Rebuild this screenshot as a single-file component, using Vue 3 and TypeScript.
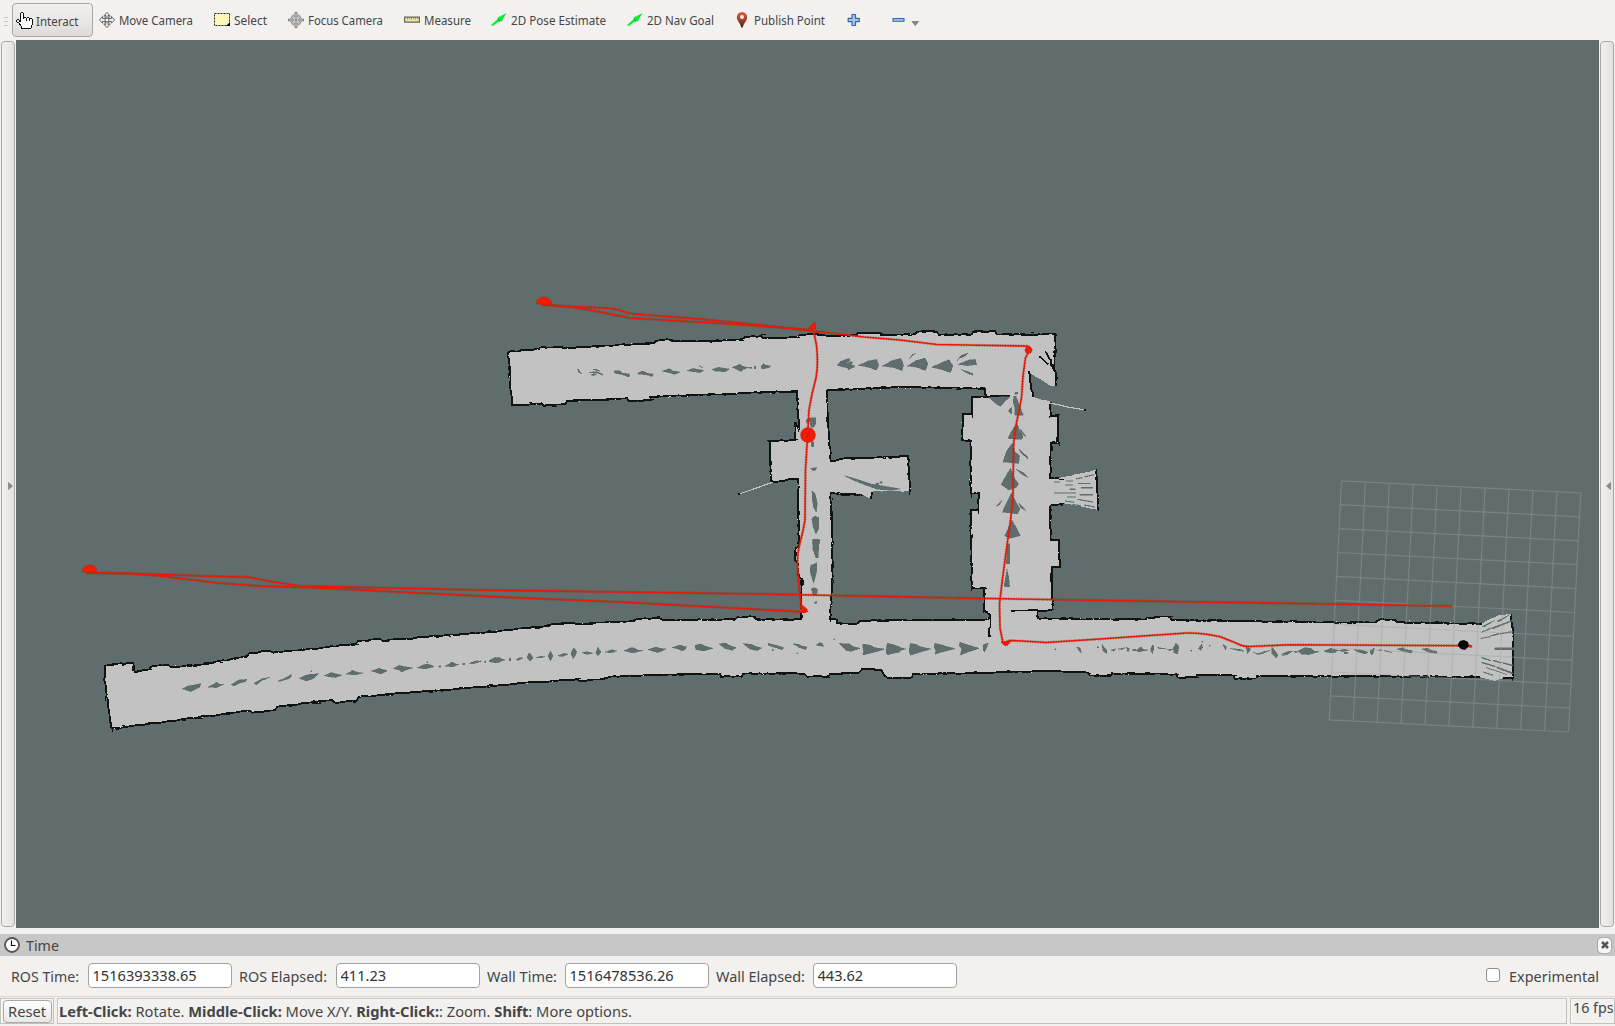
<script setup lang="ts">
interface Tool { name: string; label: string; cell: number; text: number }
interface Run { wall: boolean; pts: number[] }

const tools: Tool[] = [
  { name: 'move', label: 'Move Camera', cell: 115, text: 74 },
  { name: 'select', label: 'Select', cell: 74, text: 33 },
  { name: 'focus', label: 'Focus Camera', cell: 116, text: 75 },
  { name: 'measure', label: 'Measure', cell: 87, text: 47 },
  { name: 'arrow', label: '2D Pose Estimate', cell: 136, text: 95 },
  { name: 'arrow', label: '2D Nav Goal', cell: 107, text: 67 },
  { name: 'pin', label: 'Publish Point', cell: 111, text: 71 },
]

const fields = [
  { label: 'ROS Time:', width: 68, cell: 76, value: '1516393338.65' },
  { label: 'ROS Elapsed:', width: 88, cell: 96, value: '411.23' },
  { label: 'Wall Time:', width: 70, cell: 77, value: '1516478536.26' },
  { label: 'Wall Elapsed:', width: 89, cell: 96, value: '443.62' },
]

// Outer boundary of the mapped area, clockwise from the upper-left corridor.
const outer: Run[] = [
  { wall: true, pts: [508,352, 539,349, 540,347.5, 560,347, 563,348, 607,345.5, 654,343, 656,341, 667,339.3, 676,341, 697,341.5, 742,339.3, 745,337, 761,336, 763,338.3, 798,337, 799.5,335, 815,334, 828,336, 857,335, 857.5,332.7, 880,332.7, 881,334.7, 915,334.3, 917,332, 927,330.7, 937,332.3, 939,334.7, 972,334.5, 973,332, 995,331.3, 997,334.5, 1055,334, 1054.5,370, 1056,373, 1056,386] },
  { wall: false, pts: [1056,386, 1051,386, 1030,373] },
  { wall: true, pts: [1028.5,371, 1033,397] },
  { wall: false, pts: [1033,397, 1038,398.5, 1050,401.5] },
  { wall: true, pts: [1050.7,402, 1050.7,416, 1058,416, 1058,443, 1051,443, 1050,478, 1059,478] },
  { wall: false, pts: [1059,478, 1096.5,469.5] },
  { wall: true, pts: [1096.5,469.5, 1098,510] },
  { wall: false, pts: [1098,510, 1063,503] },
  { wall: true, pts: [1063,503.5, 1050.5,505.5, 1050.7,540, 1058.7,540, 1060,567, 1051.7,567, 1052.7,609.5, 1037.5,611, 1037.7,618.5, 1146,619.5, 1147,617.5, 1170,616.7, 1171.5,620, 1300,622, 1375,622.5, 1380,619.3, 1395,619.5, 1397,622, 1482,623.7] },
  { wall: false, pts: [1482,623.7, 1490,619, 1500,614.5, 1511,614] },
  { wall: true, pts: [1511.5,614, 1511.5,623, 1513.5,632, 1513,678, 1503,678] },
  { wall: false, pts: [1503,678, 1494,681, 1482,678] },
  { wall: true, pts: [1480,677.3, 1410,676.5, 1257,676, 1256.5,678.5, 1235,679, 1233,675.5, 1197,674.5, 1196,677.3, 1178,677.5, 1176,674.3, 1112,673.3, 1111.5,675.5, 1090,675.5, 1088,672.7, 1050,671.3, 1017,671.7, 913,674.3, 911.7,677.5, 888,678, 884,675, 881.7,670, 862,669.3, 859,672.7, 830,674.3, 828,676.7, 807,676.7, 804,673.7, 743,673.7, 741.7,676.7, 721,676.7, 720,673.7, 650,675, 610,676.7, 603,679.3, 580,681, 577,679.3, 530,682.3, 500,685, 358.5,697, 356.7,700.7, 335,702.7, 332,700, 277,706.7, 275,710.3, 252,712.7, 250,710.7, 111.5,728.5, 104.3,680, 105,665.5, 133,662.7, 134.5,671.7, 149,669.5, 151,666.7, 168,664.7, 171,667.3, 210,663.3, 247,656, 249.3,653.3, 270,650.7, 273,652.7, 356,644, 358,641, 380,638.7, 382.3,640.7, 500,631, 543,626.7, 552,624.3, 568,622.7, 580,624, 633,620.7, 637,619, 658,617.7, 662.7,620, 735,619.3, 737,617.3, 754,616.7, 756,619.3, 801,619.3, 802,579, 799,577, 797.7,563, 795,560, 795.7,548, 799,546.7, 798,479, 789,479.3, 773.5,482.3, 770.7,480, 770.3,443, 768.5,441, 795,440.3, 795.5,422, 799,430, 797.7,403, 796.7,391, 650,397, 651,400, 628.5,401, 627,398.3, 567,401, 565,404.3, 543.5,406, 541.7,403.3, 512.3,405, 508,352] },
]

// Unmapped block enclosed by the corridors.
const inner: Run[] = [
  { wall: true, pts: [826.7,390, 828,420, 830.7,461.5, 840,459, 862,458, 908,456, 910,491.7] },
  { wall: false, pts: [910,491.7, 890,491, 873,491.5] },
  { wall: true, pts: [872,491.7, 871,499] },
  { wall: false, pts: [871,499, 862,494.5] },
  { wall: true, pts: [862,494.5, 838,494, 830.7,492.7, 832.5,546.7, 832,590, 830,619, 837,619.5, 837.3,623.3, 856.7,624, 860,621, 900,620.3, 988.5,619.5, 990.5,615, 984.3,610.7, 984,588.3, 971.7,588, 970.7,510, 978.3,510, 979,493.3, 970.7,493.3, 970.7,440.7, 962,440, 963.3,414.3, 971.7,414, 972,397, 986,397, 985,388.5, 900,387.3, 826.7,390] },
]

// Small seeded generator so the scan noise along walls is the same on each load.
let seed = 7
function rnd(): number {
  seed = (seed * 16807) % 2147483647
  return seed / 2147483647
}

function roughen(run: Run): string[] {
  const p = run.pts
  const out: string[] = [`${p[0]},${p[1]}`]
  for (let i = 2; i < p.length; i += 2) {
    const dx = p[i] - p[i - 2]
    const dy = p[i + 1] - p[i - 1]
    const len = Math.hypot(dx, dy) || 1
    const n = Math.floor(len / 4)
    for (let k = 1; k < n; k++) {
      const t = k / n
      const j = (rnd() - 0.5) * (run.wall ? 1.2 : 0.8)
      out.push(`${(p[i - 2] + dx * t - (dy / len) * j).toFixed(1)},${(p[i - 1] + dy * t + (dx / len) * j).toFixed(1)}`)
    }
    out.push(`${p[i]},${p[i + 1]}`)
  }
  return out
}

const outerRuns = outer.map(r => ({ wall: r.wall, pts: roughen(r) }))
const innerRuns = inner.map(r => ({ wall: r.wall, pts: roughen(r) }))
const freeSpace = [outerRuns, innerRuns].map(rs => 'M' + rs.flatMap(r => r.pts).join('L') + 'Z').join('')
const walls = [...outerRuns, ...innerRuns].filter(r => r.wall).map(r => 'M' + r.pts.join('L')).join('')

// Specks left beside the walls by stray laser returns.
function specks(light: boolean): string {
  let d = ''
  for (const r of [...outer, ...inner].filter(q => q.wall)) {
    for (let i = 2; i < r.pts.length; i += 2) {
      const dx = r.pts[i] - r.pts[i - 2]
      const dy = r.pts[i + 1] - r.pts[i - 1]
      const len = Math.hypot(dx, dy)
      const n = Math.floor(len / (light ? 24 : 6))
      for (let k = 0; k < n; k++) {
        const t = rnd()
        const o = (rnd() - 0.5) * 2.6
        const x = r.pts[i - 2] + dx * t - (dy / len) * o
        const y = r.pts[i - 1] + dy * t + (dx / len) * o
        const w = light ? 1 : 2 + Math.floor(rnd() * 4)
        d += Math.abs(dx) > Math.abs(dy)
          ? `M${Math.round(x)} ${Math.round(y - 0.5)}h${w}v1h-${w}z`
          : `M${Math.round(x - 0.5)} ${Math.round(y)}h1v${w}h-1z`
      }
    }
  }
  return d
}
const darkSpecks = specks(false)
const lightSpecks = specks(true)

// Unknown patches, each group drawn at triple scale from its own corner.
const patches = [
  { at: '490 280', d: 'M262 267l5 2 2 6 6 5-8-2zM298 278l14-3 14 2-10 2zM309 267l14 2 8 5-10-2zM318 274l16 6 6 6-14-5zM303 285l12-5 5 2-10 5zM372 272l18 1 6 6 22 3 2 7-8 1-14-6-24-4zM444 279l14-6 12 6 20 4-4 7-14-5-28-3zM516 273l22-7 12 7 20 3-16 7-18-5zM590 272l20-7 14 3 17 3-11 7-20-3zM628 257l10 6-6-1zM666 268l20-6 32 5-12 8-30-1zM727 262l22-9 8 5 18 5-16 6-6 6-8-5zM776 262h10v3h-10zM793 259h4v8h-4zM812 262l8-11 6 4 17 3-7 5-18 4zM948 420l12-6h17v16l-6 12h-8l-3-18-10 4zM963 486h8v14h-6zM962 565l18-3-3 8-8 3zM966 633l8 6 7 28-2 28-5-12-7-25z' },
  { at: '800 310', d: 'M112 165l10-11 26-9 3 6-16 12 18-8 6 4-11 8 14-2 2 6-19 8-4-6-18-3zM175 166l30-13 25-5 6 18-7 15-22-9zM246 168l30-16 26-7 9 20-5 17-24-9zM328 148l8-14 12-5-15 12zM322 168l26-16 27-8 9 18-8 20-25-10zM395 172l25-12 27-11 12 19-8 20-25-9zM470 154l12-17 22-8-7 8-18 8zM474 163l33-13 19-2 4 16-28 3zM484 179l18 5 17 7-1 5-22-9zM566 262l64-2-18 17-10 12-12-6zM642 258l6 1 6 16 16 41-26-1 1-18-6-23zM626 299l10-7-1 20-8-6zM650 340l9 20 10 18-3 10-27-1-15-2 10-20zM661 357l13 16 3 8-14-16zM637 400l7 24 15 14-3 22-47-4 11-33zM657 417l26 24v6l-20-19zM632 475l10 27 14 20-8 11-22 7-22-16 15-29zM648 478l23 10 13 14-14-6zM635 548l14 30 11 19-8 15-45-6 13-28zM588 589l18-18-8 14zM656 578l22 24-16-9zM636 630l10 18 15 29-33 8-14-8zM644 248l8-2 2 5-8 2zM134 497l34 10 45 15 48 8 40 7-25 4-44-3-36-13-30-12zM240 515h7v5h-7zM228 520h8v5h-8zM160 557l26 14v3l-17-10zM763 548h64v2h-64zM763 515h18v2h-18zM798 512h20v2h-20zM827 506l20-4v2l-20 4zM855 499l28-6v2l-28 7zM796 524h24v2h-24zM835 520h36v2h-36zM810 537h16v2h-16zM844 532h34v3h-34zM800 560h28v2h-28zM840 553h38v3h-38zM796 572l25 4v2l-25-4zM833 567l46 8v2l-46-8zM818 582l26 5v2l-26-5zM853 584l32 6v2l-32-6z' },
  { at: '80 540', d: 'M307 446l18-8 38-7-4 11-28 13zM384 441l19-10 8-6 4 7 16 1-22 10zM453 434l23-14 24-2-3 7-20 5-16 8zM522 430l24-14 24-4-25 10-16 12zM595 423l26-12 13-8v8l-10 6-28 8zM658 415l24-11 34-3-16 15-22 7zM732 407l22-9 31 7-17 8-16-2zM798 402l20-11 14 6 17 2-22 6zM874 393l23-8 25 7-19 10zM940 386l17-10 18 4 24 4-21 6-13 6-8-6zM1012 383l20-9 13-2 18 8-28 7zM1077 377h5v5h-5zM1095 378l22-12 10 6 9 1-17 8zM1149 370h5v4h-5zM1167 370l24-8 11 3-22 6zM1214 363h4v6h-4zM1226 365l14-9 20-4v14l-14 2zM1040 366h3v3h-3zM693 392h3v3h-3z' },
  { at: '480 540', d: 'M0 363h4v3H0zM26 362l20-10 14 3 15 5-25 8zM88 355h4v7h-4zM108 359l10-6 12 1-16 7zM141 352l7-14 8 10 3 7-9 9zM168 352l16-3 11 1-15 4zM204 347l7-14 8 15-8 15zM234 347l18-7 13 3-20 7zM273 341l8-18 9 12-4 12-7 9zM306 338l16-3 16 5-18 3zM347 338l7-16 9 14-9 12zM376 336l20-7 15 4-18 6zM432 332l24-10 18 8 14 2-30 7zM504 329l24-8 12 4 18 2-24 11zM576 323l24-8 20 6-5 8-10 4-11-6zM645 316l16-4 20 8 18 5-27 8-24-4zM717 312l20-3 14 8 18 6-13 8-22-6zM788 310l26 3 12 6 19 5-13 8-22-5zM864 310l22 5 26 8-6 6-22-7-18-5zM938 311l18 2 10 5 15 3-4 8-20-7zM1008 316l12-9 8 5 2 8-10-3zM1077 310l32 2 9 7 23 6-28 9-14-2zM1148 312l24 4 10 6 30 6-26 8-38 9 3-10-2-10zM1222 310l38 10v16l-38 8-4-8zM877 328h3v4h-3zM1061 297h3v3h-3zM951 339h3v3h-3zM998 0h22l-7 30-5 24-9-25zM992 76l18-8v26l-9 36-11-36zM994 147l8-4 11 5-3 18h-10zM1003 187l8-3v4l-5 4z' },
  { at: '740 400', d: 'M216 274l10 12 6 25-4 24-8-16zM215 356l10-8 12 5-1 34-8 15-8-20zM218 418h20l-4 56h-4l-10-26z' },
  { at: '880 500', d: 'M0 447h12v3H0zM22 430l18 4 10 6 28 7-28 8-28 10-3-13zM91 430l18 3 12 7 32 7-34 10-28 9-4-13zM165 430l24 6 36 10-36 9-24 8 3-12-6-10zM240 427l28 9 30 9-28 9-29 11 4-18-8-12zM310 435l15-7-3 10-8 17-5-4zM590 441l10 2 5 16-8-6zM652 440l5 3h-5zM666 432l5 8 10 12-2 9-10-9zM694 450l13-4-6 8zM714 447l22-4-12 6zM739 442l10 5-5 10zM758 448h9v4h-9zM767 452l16-12 5 8 15 2-25 6zM811 447l8-13 3 10-5 17zM833 442l26 5-22-1zM862 449l16-2-6 5zM880 443l8-13 9 8-4 24-12-4zM955 446l10-14 3 10-6 9zM1029 433l11 8-4 10zM1050 445l34 4 8 5-22-3zM1098 441l14 5-9 16zM1118 456l20 6-8-1zM1130 463l24-9 17-3-29 12zM1176 442l7 8 11 16-5 9-14-14zM1206 467l16-11 14-1-14 9zM1242 454l18 1-14 3zM525 447h3v3h-3zM965 424h3v3h-3zM988 436h3v3h-3zM933 451h3v3h-3zM382 132h7v59h-10zM381 208l5 22 3 31-17-2z' },
  { at: '1280 460', d: 'M4 583l18-8 16-2-24 8zM54 573l20-10 18 2 11 8 13 2-30 9-22-2zM133 573l20-9 8 4 15 3-15 8-20-2zM178 571l18-4 10 5-20 3zM193 577h10v4h-10zM221 568l22 2 22 7-10 5-24-7zM269 572l14-8-3 16-5 6zM296 569h10v3h-10zM312 571l24 6-16-2zM351 567l18-4 8 5 21 5-5 7-24-6zM427 567l16-3 10 7 17 3v6l-24-3zM645 564h56v6h-56zM603 535l26-6v2l-26 5zM630 527l27-7v3l-27 6zM660 520l38-6v2l-38 7zM606 515l25-11v2l-25 12zM634 504l64-24v3l-60 24zM607 499l38-18-33 20zM652 483l38-19-34 22zM606 592l27 9v2l-27-8zM640 600l24 7v3l-24-7zM668 607l30 8v3l-30-8zM606 606l40 12v3l-40-12zM650 620l48 18v4l-48-18zM618 622l64 22-60-19zM609 635l30 10v2l-30-10z' },
]

const gridLines: string[] = []
for (let i = 0; i <= 10; i++) {
  gridLines.push(`M${1341.5 + i * 23.92} ${480.8 + i * 1.22}l-12.2 239`)
  gridLines.push(`M${1341.5 - i * 1.22} ${480.8 + i * 23.9}l239.2 12.2`)
}

const trail = [
  'M542 304.5 570 306.5 605 308Q615 308.500 622 311T634 314L700 319 760 325 830 333 864 337 900 340 937 344.5 980 345.3 1028 346 1030 349 1025.5 358 1023 376 1021.5 398 1017.5 418Q1013.500 437 1013.5 450L1013 498 1010 525 1007 545 1002 583 999.5 604 1000 628 1003 643 1010 640.500 1022 641 1046 642.5 1100 639 1150 635.5 1187 633Q1203 632.700 1221 637L1236 643Q1242 646.500 1250 646.5L1290 644.7 1472 645.7',
  'M542 304.5 575 307.5 600 312 630 318 680 321 740 324.5 812 330',
  'M813 328 816.500 345Q818.500 364 816 378L812 394 809 410 807.5 436 805.5 470 805 520Q803 532 800 543T797.5 565L799 586 801.5 608',
  'M86 573 130 573.5 162 574.5 220 576.5 248 577 268 581 300 586 480 590 760 594 960 598 1200 602 1300 603.5 1452.5 606',
  'M90 573 130 573.5 160 576 218 583 260 586 320 588 500 597 620 602 806 612',
]
</script>

<template>
  <div class="window">
    <header class="toolbar">
      <span class="grip"><i /><i /><i /></span>
      <button class="interact">
        <svg class="hand" width="17" height="17" viewBox="0 0 17 17" shape-rendering="crispEdges">
          <path d="M5 1h2v6h2V5h2v1h2v1h2v1h1v5h-1v3H5v-2H4v-2H3v-2H1V9h2v1h1V1z" fill="#fff" />
          <path d="M5 0h2v1H5zM4 1h1v9H4zM7 1h1v6H7zM8 5h2v1H8zM10 6h1v3h-1zM11 5h2v1h-2zM13 6h1v3h-1zM14 6h2v1h-2zM16 7h1v6h-1zM15 13h1v3h-1zM5 16h10v1H5zM5 14h1v2H5zM4 12h1v2H4zM3 11h1v2H3zM1 10h2v1H1zM0 8h1v2H0zM1 7h2v1H1zM3 8h1v2H3z" fill="#111" />
        </svg>
        <svg class="label small" width="43" height="20"><text y="15" textLength="42.500" lengthAdjust="spacingAndGlyphs">Interact</text></svg>
      </button>
      <div v-for="(t, i) in tools" :key="i" class="tool" :style="{ width: t.cell + 'px' }">
        <svg class="icon" width="16" height="16" viewBox="0 0 16 16">
          <g v-if="t.name === 'move'" fill="#f4f4f4" stroke="#555" stroke-width=".9">
            <path d="M8 .5 10.7 3.5H9v3h3.5V4.5L15.6 8l-3.1 3V9.4H9.2v3.2h1.5L8 15.5l-2.7-2.9h1.5V9.4H3.5V11L.4 8l3.1-3.500v2H7v-3H5.3z" />
            <path d="M4.5 3.8 7 6.3M11.5 3.8 9 6.3M4.5 12 7 9.6M11.5 12 9 9.6" /><circle cx="8" cy="8" r="2" />
          </g>
          <g v-else-if="t.name === 'select'">
            <path d="M.5 1.5h15v12H.5z" fill="#fff6b8" stroke="#222" stroke-dasharray="2 1" /><path d="M16 10v4h-4z" fill="#000" />
          </g>
          <g v-else-if="t.name === 'focus'" fill="none">
            <circle cx="8" cy="8" r="4.6" stroke="#858585" stroke-width="2.6" /><circle cx="8" cy="8" r="4.6" stroke="#eee" stroke-width=".9" />
            <path d="M8 0v6.500M8 9.500V16M0 8h6.500M9.500 8H16" stroke="#777" stroke-width="2.6" /><path d="M8 1v5M8 10v5M1 8h5M10 8h5" stroke="#eee" stroke-width=".8" /><circle cx="8" cy="8" r="1" fill="#777" />
          </g>
          <g v-else-if="t.name === 'measure'">
            <path d="M.6 5.100h14.800v5.100H.6z" fill="#eee5a5" stroke="#66645d" stroke-width="1.200" /><path d="M3.500 5v2.500M5.500 5v2M7.500 5v2.500M9.500 5v2M11.500 5v2.500M13.500 5v2" stroke="#77735f" stroke-width=".7" />
          </g>
          <g v-else-if="t.name === 'arrow'">
            <path d="M0 13 7.500 6.500 7 5.500 15.500 1 11 8.500 9.500 8.500 1.500 14z" fill="#00f22b" /><path d="M7 5.700l1.300 3.500 3-.8" fill="none" stroke="#08a324" stroke-width=".8" />
          </g>
          <g v-else>
            <defs><linearGradient id="pinFill" x1="0" y1="0" x2="0" y2="1"><stop offset="0" stop-color="#df573b" /><stop offset=".5" stop-color="#a8402a" /><stop offset="1" stop-color="#3d2b12" /></linearGradient></defs>
            <path d="M8 0a5.200 5.200 0 0 1 5.200 5.200C13.200 9 9.500 11 8.800 15.500H7.200C6.500 11 2.800 9 2.800 5.200A5.200 5.200 0 0 1 8 0z" fill="url(#pinFill)" /><circle cx="8" cy="5" r="2" fill="#f7ece8" />
          </g>
        </svg>
        <svg class="label small" :width="t.text" height="20"><text y="15" :textLength="t.text" lengthAdjust="spacingAndGlyphs">{{ t.label }}</text></svg>
      </div>
      <svg class="icon add" width="14" height="14" viewBox="0 0 14 14"><path d="M5 1.500h3.500V5.300h3.800v3.400H8.500v3.800H5V8.700H1.200V5.300H5z" fill="#a5c5e9" stroke="#3567a8" stroke-width="1.200" stroke-linejoin="round" /></svg>
      <svg class="icon remove" width="28" height="14" viewBox="0 0 28 14"><path d="M1 5.500h11v2.800H1z" fill="#a5c5e9" stroke="#3567a8" stroke-width="1.100" stroke-linejoin="round" /><path d="M20 8.500h6.500l-3.200 4z" fill="#888" stroke="#777" stroke-width=".8" /></svg>
    </header>

    <main class="workspace">
      <aside class="side"><div class="handle left"><svg width="6" height="8"><path d="M.5.500v7l4-3.500z" fill="#888" stroke="#777" stroke-width=".6" /></svg></div></aside>
      <svg class="map" width="1583" height="888" viewBox="16 40 1583 888">
        <g shape-rendering="crispEdges">
          <path :d="freeSpace" fill="#c2c2c2" fill-rule="evenodd" />
          <path :d="walls" fill="none" stroke="#111313" stroke-width="1.800" />
          <path :d="darkSpecks" fill="#111313" />
          <path :d="lightSpecks" fill="#dedede" />
          <path d="M985 397.500l7-1.500h17l1 1M1011.500 610.800l27-.8M990.500 614v13l-1.500 2v7h2M1045.500 351.500l5 9 4 11M1039.500 356.500l9 8M1051 359v6l4 6" fill="none" stroke="#111313" stroke-width="1.600" />
          <path d="M739 494l12-4 22-8M1050.500 403l17 4 18 3" fill="none" stroke="#c5c5c5" stroke-width="1.200" />
          <path d="M738 493h2v2h-2zM1084 409h2v2h-2z" fill="#111" />
          <g v-for="p in patches" :key="p.at" :transform="`translate(${p.at}) scale(.33333)`"><path :d="p.d" fill="#5f6e6c" stroke="#5f6e6c" stroke-width="1.500" /></g>
        </g>
        <path :d="gridLines.join('')" fill="none" stroke="#a0a0a4" stroke-opacity=".42" stroke-width="1.200" />
        <g fill="none" stroke-linejoin="round">
          <path v-for="(d, i) in trail" :key="'d' + i" :d="d" stroke="#801d12" stroke-opacity=".5" stroke-width="2.900" stroke-dasharray="1 1.600" />
          <path v-for="(d, i) in trail" :key="i" :d="d" stroke="#e91a05" stroke-width="1.600" />
        </g>
        <g fill="#f11b04" stroke="#a82618" stroke-width="1" stroke-dasharray="1 1.500">
          <path d="M536 304q1-7 8-7 7 0 8 8z" /><path d="M82 572q0-7 8-7 7 0 7 7.500z" />
          <path d="M808 329l4-5 3-2 1 7z" /><circle cx="808" cy="435" r="7.500" /><circle cx="1028.500" cy="350" r="3.500" />
          <path d="M801 604l6 5 1 3-8 1z" /><path d="M1001 642l10-1-3 4-3 1z" />
        </g>
        <path d="M808 433.500v2.500l-1.500 2" fill="none" stroke="#a31a0b" stroke-width="1" />
        <path d="M1466 645l7 1.500-2 1.500-4-1z" fill="#ff2412" />
        <path d="M1458 644l2-3 4-1 4 2 1 4-4 4-4-1-3-3z" fill="#060606" />
      </svg>
      <aside class="side"><div class="handle right"><svg width="6" height="8"><path d="M5.500.500v7l-4-3.500z" fill="#888" stroke="#777" stroke-width=".6" /></svg></div></aside>
    </main>

    <section class="time-panel">
      <div class="title">
        <svg width="18" height="18" viewBox="0 0 18 18"><circle cx="9" cy="9" r="7" fill="#fff" stroke="#555" stroke-width="1.800" /><path d="M8.500 4.500v5h4" fill="none" stroke="#111" stroke-width="1.200" /></svg>
        <svg class="label" width="33" height="22"><text y="16" textLength="33" lengthAdjust="spacingAndGlyphs">Time</text></svg>
        <button class="close"><svg width="8" height="8"><path d="M1 1l6 6M7 1 1 7" stroke="#555" stroke-width="2.500" /></svg></button>
      </div>
      <div class="fields">
        <template v-for="f in fields" :key="f.label">
          <label class="name" :style="{ width: f.cell + 'px' }"><svg class="label" :width="f.width" height="22"><text y="16" :textLength="f.width" lengthAdjust="spacingAndGlyphs">{{ f.label }}</text></svg></label>
          <input type="text" :value="f.value" readonly>
        </template>
        <label class="experimental"><i class="box" /><svg class="label" width="90" height="22"><text y="16" textLength="90" lengthAdjust="spacingAndGlyphs">Experimental</text></svg></label>
      </div>
    </section>

    <footer class="status">
      <div class="frame first"><button class="reset"><svg class="label" width="38" height="22"><text y="16" textLength="38" lengthAdjust="spacingAndGlyphs">Reset</text></svg></button></div>
      <div class="frame hint"><svg class="label" width="574" height="22"><text y="16" textLength="573" lengthAdjust="spacingAndGlyphs"><tspan class="b">Left-Click:</tspan> Rotate. <tspan class="b">Middle-Click:</tspan> Move X/Y. <tspan class="b">Right-Click:</tspan>: Zoom. <tspan class="b">Shift</tspan>: More options.</text></svg></div>
      <div class="frame fps"><svg class="label" width="41" height="22"><text y="16" textLength="40.500" lengthAdjust="spacingAndGlyphs">16 fps</text></svg></div>
    </footer>
  </div>
</template>

<style>
body { margin: 0; overflow: hidden; }
</style>

<style scoped>
* { box-sizing: border-box; }
.window { width: 1615px; height: 1026px; display: flex; flex-direction: column; background: #f2f1f0; font-family: "Noto Sans", "Open Sans", sans-serif; color: #4c4c4c; overflow: hidden; }
button { font-family: inherit; }
svg { display: block; flex: none; }
.label { overflow: visible; fill: #454545; font-size: 14.3px; }
.label.small { font-size: 13px; }
.b { font-weight: 700; }
.toolbar { height: 40px; flex: none; display: flex; align-items: flex-start; }
.grip { width: 12px; padding: 17px 0 0 4px; display: flex; flex-direction: column; gap: 3px; flex: none; }
.grip i { width: 4px; height: 1px; background: #c9c8c7; }
.interact { width: 81px; height: 34px; margin: 3px 6px 0 0; padding: 0 0 0 4px; display: flex; align-items: center; gap: 3px; border: 1px solid #aaa8a5; border-radius: 4px; background: linear-gradient(#f1f0ef, #e8e6e4 60%, #dcdad8); flex: none; }
.hand { margin-left: -1px; margin-top: 1px; }
.interact .label { margin-top: 1px; }
.tool { height: 40px; display: flex; align-items: flex-start; gap: 3.500px; flex: none; }
.tool .icon { margin-top: 12px; }
.tool .label { margin-top: 10px; }
.add { margin: 13px 0 0 2px; }
.remove { margin: 13px 0 0 31px; }
.workspace { height: 888px; flex: none; display: flex; }
.side { width: 16px; flex: none; padding: 1px 1px 0; }
.handle { width: 14px; height: 886px; display: flex; align-items: center; justify-content: center; border: 1px solid #aaa8a5; border-radius: 4px; background: linear-gradient(90deg, #f2f1f0, #e3e1df); }
.handle svg { margin: 3px 0 0 5px; }
.handle.right svg { margin-left: 1px; }
.map { background: #5f6e6c; }
.time-panel { height: 68px; flex: none; padding-top: 6px; }
.title { height: 22px; display: flex; align-items: center; background: #c7c7c7; padding-left: 3px; }
.title .label { margin: 2px 0 0 5px; }
.close { width: 13px; height: 15px; margin: 0 4px 0 auto; padding: 0; display: flex; align-items: center; justify-content: center; background: #f5f4f3; border: 1px solid #fafafa; border-radius: 4px; box-shadow: 0 0 0 1px #aaa; }
.fields { height: 40px; padding-left: 12px; display: flex; align-items: flex-start; }
.name { padding-top: 10px; flex: none; }
.name .label { margin-left: -1px; }
input { width: 144px; height: 25px; margin: 7px 8px 0 0; padding: 0 4px 1px 3.500px; border: 1px solid #a4a29e; border-radius: 4px; background: #fff; font: 14.600px "Noto Sans", sans-serif; color: #333; outline: 0; flex: none; }
.experimental { display: flex; margin: 10px 16px 0 auto; gap: 9px; }
.box { width: 14px; height: 14px; margin-top: 2px; border: 1px solid #8f8e8b; border-radius: 3px; background: #fff; }
.status { height: 30px; display: flex; border-top: 1px solid #d7d6d4; padding-top: 1px; }
.frame { height: 26px; border: 1px solid #c4c2c0; box-shadow: inset 1px 1px #fafafa; flex: none; }
.first { width: 54px; padding: 1px 2px; }
.reset { width: 49px; height: 23px; padding: 0 4px; border: 1px solid #aaa8a5; border-radius: 4px; background: linear-gradient(#fff, #e9e8e6); display: flex; align-items: center; }
.hint { width: 1510px; margin: 0 3px; padding: 2px 0 0 1px; }
.fps { width: 45px; padding: 0 0 0 2px; }
.fps svg { margin-top: -2px; }
</style>
